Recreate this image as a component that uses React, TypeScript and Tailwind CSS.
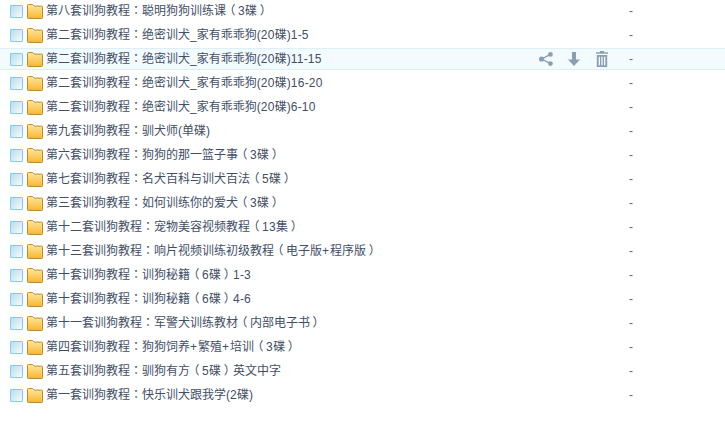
import React from 'react';

const rows = [
  '第八套训狗教程：聪明狗狗训练课（3碟）',
  '第二套训狗教程：绝密训犬_家有乖乖狗(20碟)1-5',
  '第二套训狗教程：绝密训犬_家有乖乖狗(20碟)11-15',
  '第二套训狗教程：绝密训犬_家有乖乖狗(20碟)16-20',
  '第二套训狗教程：绝密训犬_家有乖乖狗(20碟)6-10',
  '第九套训狗教程：驯犬师(单碟)',
  '第六套训狗教程：狗狗的那一篮子事（3碟）',
  '第七套训狗教程：名犬百科与训犬百法（5碟）',
  '第三套训狗教程：如何训练你的爱犬（3碟）',
  '第十二套训狗教程：宠物美容视频教程（13集）',
  '第十三套训狗教程：响片视频训练初级教程（电子版+程序版）',
  '第十套训狗教程：训狗秘籍（6碟）1-3',
  '第十套训狗教程：训狗秘籍（6碟）4-6',
  '第十一套训狗教程：军警犬训练教材（内部电子书）',
  '第四套训狗教程：狗狗饲养+繁殖+培训（3碟）',
  '第五套训狗教程：驯狗有方（5碟）英文中字',
  '第一套训狗教程：快乐训犬跟我学(2碟)',
];

// the reference centres full-width punctuation in its em box, Noto doesn't for parens
const Name = ({ text }: { text: string }) => (
  <span className="whitespace-nowrap [text-spacing-trim:space-all]">
    {text.split(/([：（）+]|[0-9]+)/).map((part, i) => {
      if (part === '：') return <span key={i} className="font-['Noto_Sans_CJK_TC']">{part}</span>;
      if (part === '（' || part === '）')
        return <span key={i} className="inline-block w-3 text-center [font-feature-settings:'palt']">{part}</span>;
      if (part === '+') return <span key={i} className="tracking-[1px]">{part}</span>;
      if (/^[0-9]+$/.test(part)) return <span key={i} className="tracking-[0.33px]">{part}</span>;
      return part;
    })}
  </span>
);

const Folder = () => (
  <svg width="16" height="15" viewBox="0 0 16 15" className="mt-[1px] shrink-0">
    <defs>
      <linearGradient id="folderFill" x1="0" y1="0" x2="0" y2="1">
        <stop offset="0" stopColor="#ffe89f" />
        <stop offset="1" stopColor="#f7b62f" />
      </linearGradient>
    </defs>
    <path d="M.5 1.5a1 1 0 0 1 1-1h4.2l1.5 1.6h7.3a1 1 0 0 1 1 1v10.4a1 1 0 0 1-1 1h-13a1 1 0 0 1-1-1z" fill="url(#folderFill)" stroke="#b98a2e" />
  </svg>
);

const Actions = () => (
  <div className="flex items-center text-[#8a9fb2]">
    <svg width="14" height="14" viewBox="0 0 14 14" className="mr-[15px]" fill="currentColor">
      <circle cx="2.6" cy="7" r="2.6" />
      <circle cx="11.4" cy="2.4" r="2.4" />
      <circle cx="11.4" cy="11.6" r="2.4" />
      <path d="M2.6 7 11.4 2.4M2.6 7l8.8 4.6" stroke="currentColor" strokeWidth="1.4" />
    </svg>
    <svg width="12" height="14" viewBox="0 0 12 14" className="mr-[16px]" fill="currentColor">
      <path d="M4 0h4v7.5h4L6 14 0 7.5h4z" />
    </svg>
    <svg width="12" height="16" viewBox="0 0 12 16" fill="currentColor">
      <path d="M4 0h4v1.2h4v1.500H0V1.200h4z" />
      <path fillRule="evenodd" d="M.8 4h10.400v12H.800zm1.900 1.800v8.400H4V5.800zm2.650 0v8.400h1.300V5.800zm2.650 0v8.400H9.300V5.800z" />
    </svg>
  </div>
);

export default function App() {
  return (
    <div className="h-[423px] w-[725px] overflow-hidden bg-white font-['Microsoft_YaHei','Liberation_Sans','Noto_Sans_CJK_SC',sans-serif] text-xs text-[#424e67]">
      {rows.map((name, i) => {
        const active = i === 2;
        return (
          <div
            key={i}
            className={`mb-[2px] flex h-[22px] items-center border-y pl-[10px] ${
              active ? 'border-[#daf0fb] bg-[#f4fbff]' : 'border-transparent'
            }`}
          >
            <span className="mr-[4px] h-[13px] w-[13px] shrink-0 rounded-[1px] border border-[#80cdf5] bg-gradient-to-br from-[#bcdcf0] to-[#f5fafd]" />
            <Folder />
            <div className="ml-[3px] min-w-0 flex-1 pb-[2px]">
              <Name text={name} />
            </div>
            {active && <Actions />}
            <div className={`w-[96px] text-[#666] ${active ? 'ml-[21px]' : ''}`}>-</div>
          </div>
        );
      })}
    </div>
  );
}
